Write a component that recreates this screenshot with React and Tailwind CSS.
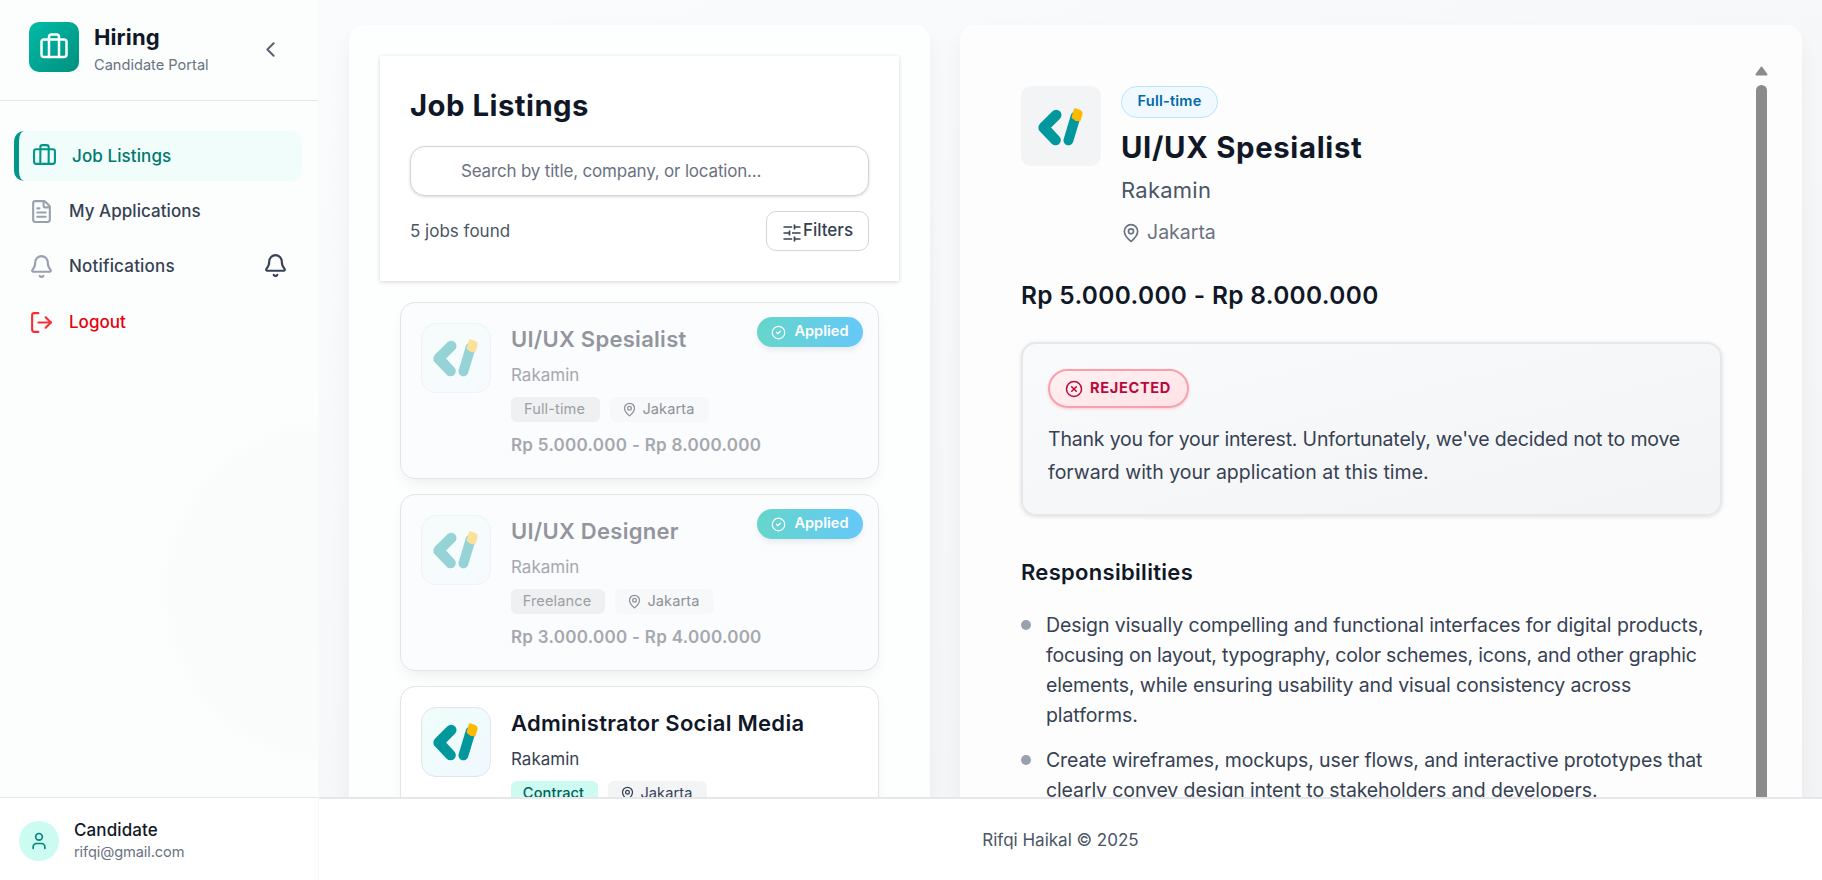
import React from "react";
import {
  Bell,
  Briefcase,
  ChevronLeft,
  CircleCheck,
  CircleX,
  FileText,
  LogOut,
  MapPin,
  User,
} from "lucide-react";

function CompanyMark({ className }) {
  return (
    <svg viewBox="0 0 136 112" className={className} fill="none">
      <path d="M55 18 L17 56 L53 94" stroke="#00979d" strokeWidth="32" strokeLinecap="round" strokeLinejoin="round" />
      <path d="M92 95 L114 22" stroke="#00979d" strokeWidth="30" strokeLinecap="round" />
      <path d="M108 2 Q109 -3 113 -2 L128 3 Q136 7 135 15 L128 37 Q113 39 103 28 Q101 26 102 23 Z" fill="#fdb900" />
    </svg>
  );
}

function SlidersMark() {
  return (
    <svg viewBox="0 0 18 18" className="mt-[3px] h-[18px] w-[18px]" fill="none" stroke="#364153" strokeWidth="1.7">
      <path d="M0.5 3h8.7M11.5 3h6M11.5 0.6v4.8M0.5 9h5.8M9 9h8.5M6.5 6.6v4.8M0.5 15h8.7M11.5 15h6M11.5 12.6v4.8" />
    </svg>
  );
}

const navItems = [
  { label: "My Applications", Icon: FileText, track: "tracking-[0.05px]" },
  { label: "Notifications", Icon: Bell, bell: true, track: "tracking-[0.19px]" },
];

function Sidebar() {
  return (
    <aside className="flex h-full w-[319px] shrink-0 flex-col border-r border-[#f7f8f9] bg-[#fcfdfd] bg-[radial-gradient(circle_at_335px_592px,#fafcfc_0px,#f9fcfb_150px,transparent_175px)]">
      <div className="flex h-[101px] shrink-0 border-b border-[#e5e7eb] pl-[29px] pt-[22px]">
        <div className="flex h-[50px] w-[50px] items-center justify-center rounded-[10px] bg-linear-to-br from-[#00bba7] to-[#009080]">
          <Briefcase size={30} color="white" />
        </div>
        <div className="ml-[15px] mt-px w-[164px] whitespace-nowrap">
          <div className="text-[22px] font-bold leading-[28px] tracking-[0.1px] text-[#101828]">Hiring</div>
          <div className="mt-1 text-[14.6px] leading-[20px] text-[#6a7282]">Candidate Portal</div>
        </div>
        <ChevronLeft size={25} className="mt-[15px] text-[#5b6472]" />
      </div>
      <nav className="flex flex-1 flex-col pl-[14px] pr-4 pt-[30px] text-[17px] font-medium">
        <div className="flex h-[50px] items-center gap-[15px] rounded-[10px] border-l-[5px] border-[#009689] bg-[#f0fdfa] pl-[13px] text-[#00786f]">
          <Briefcase size={25} className="-mt-0.5 text-[#009689]" />
          <span className="pt-px tracking-[0.1px]">Job Listings</span>
        </div>
        {navItems.map(({ label, Icon, bell, track }) => (
          <div key={label} className="mt-[5.5px] flex h-[50px] items-center gap-[15px] px-[15px] text-[#364153]">
            <Icon size={25} className="-mt-px text-[#99a1af]" />
            <span className={track}>{label}</span>
            {bell && <Bell size={25} className="-mr-px -mt-[3px] ml-auto text-[#364153]" />}
          </div>
        ))}
        <div className="mt-[6px] flex h-[50px] items-center gap-[15px] px-[15px] text-[#e7000b]">
          <LogOut size={25} className="-mt-px text-[#fb2c36]" />
          <span>Logout</span>
        </div>
      </nav>
      <div className="flex h-[83px] shrink-0 border-t border-[#e5e7eb] bg-white pl-[19px] pt-[23px]">
        <div className="flex h-10 w-10 items-center justify-center rounded-full bg-[#cbfbf1]">
          <User size={20} className="text-[#00857a]" />
        </div>
        <div className="-mt-[3px] ml-[15px] whitespace-nowrap">
          <div className="text-[17px] font-medium leading-[24px] tracking-[0.1px] text-[#101828]">Candidate</div>
          <div className="text-[14.6px] leading-[20px] tracking-[-0.1px] text-[#6a7282]">rifqi@gmail.com</div>
        </div>
      </div>
    </aside>
  );
}

const jobs = [
  { title: "UI/UX Spesialist", type: "Full-time", salary: "Rp 5.000.000 - Rp 8.000.000", applied: true, typeW: "w-[89px]" },
  { title: "UI/UX Designer", type: "Freelance", salary: "Rp 3.000.000 - Rp 4.000.000", applied: true, typeW: "w-[94px]" },
  { title: "Administrator Social Media", type: "Contract", salary: "Rp 4.000.000 - Rp 6.000.000", applied: false, typeW: "w-[87px]" },
];

function JobCard({ job }) {
  const a = job.applied;
  return (
    <div
      className={
        "relative flex h-[177px] shrink-0 whitespace-nowrap rounded-[15px] border border-[#e1e4e8] pl-5 pt-5 shadow-[0_8px_16px_-4px_rgba(0,0,0,0.07)] " +
        (a ? "bg-[#fbfcfd]" : "bg-white")
      }
    >
      <div
        className={
          "flex h-[70px] w-[70px] shrink-0 items-center justify-center rounded-[15px] border border-[#dfe6ea] bg-linear-to-br from-[#f0fdfa] to-[#f0f9ff] " +
          (a ? "opacity-40" : "")
        }
      >
        <CompanyMark className="-ml-[2px] h-[37px] w-[45px] overflow-visible" />
      </div>
      <div className="ml-5">
        <div className={"mt-[2px] text-[22px] font-semibold leading-[28px] tracking-[0.28px] " + (a ? "text-[#92959d]" : "text-[#101828]")}>
          {job.title}
        </div>
        <div className={"mt-[10px] text-[17px] leading-[25px] " + (a ? "text-[#a5a8af]" : "text-[#364153]")}>Rakamin</div>
        <div className="mt-[9px] flex h-[25px] gap-[10px] text-[14.6px] leading-[25px]">
          <span className={"rounded-[6px] pr-[2px] text-center tracking-[0.1px] " + job.typeW + (a ? " bg-[#eff0f1] text-[#9b9fa6]" : " bg-[#cbfbf1] font-medium text-[#005f5a]")}>
            {job.type}
          </span>
          <span className={"flex w-[99px] items-center justify-center gap-[5px] rounded-[6px] pr-[2px] tracking-[0.1px] " + (a ? "bg-[#f7f8f9] text-[#8d9199]" : "bg-[#f3f4f6] text-[#364153]")}>
            <MapPin size={15} />
            Jakarta
          </span>
        </div>
        <div className={"mt-[11px] text-[17px] font-semibold leading-[25px] tracking-[0.28px] " + (a ? "text-[#a5a8af]" : "text-[#364153]")}>
          {job.salary}
        </div>
      </div>
      {a && (
        <div className="absolute right-[15px] top-[14px] flex h-[30px] w-[106px] items-center justify-center gap-[8px] rounded-full bg-linear-to-r from-[#66d5ca] to-[#66c8f8] text-[14.6px] font-semibold text-white shadow-[0_4px_6px_-1px_rgba(0,0,0,0.08)]">
          <CircleCheck size={15} />
          Applied
        </div>
      )}
    </div>
  );
}

function JobList() {
  return (
    <section className="h-[900px] w-[581px] shrink-0 rounded-[15px] bg-[#fdfefe] px-[31px] pt-[31px] shadow-[0_12px_24px_-4px_rgba(0,0,0,0.07)]">
      <div className="h-[225px] bg-white px-[30px] pt-[30px] shadow-[0_1px_4px_rgba(0,0,0,0.17)]">
        <h1 className="text-[29.3px] font-bold leading-[40px] tracking-[0.48px] text-[#101828]">Job Listings</h1>
        <div className="mt-[20px] flex h-[50px] items-center rounded-[15px] border border-[#d1d5dc] bg-white pl-[50px] pt-px text-[17px] tracking-[-0.18px] text-[#6a7282] shadow-[0_1px_3px_rgba(0,0,0,0.15)]">
          Search by title, company, or location...
        </div>
        <div className="mt-[15px] flex h-10 items-center justify-between text-[17px] text-[#4a5565]">
          <span className="pt-px">5 jobs found</span>
          <button className="flex h-10 w-[103px] items-center justify-center rounded-[10px] border border-[#d1d5dc] bg-white pl-px font-medium text-[#364153]">
            <SlidersMark />
            <span className="ml-[2px]">Filters</span>
          </button>
        </div>
      </div>
      <div className="mx-5 mt-[21px] flex flex-col gap-[15px]">
        {jobs.map((job) => (
          <JobCard key={job.title} job={job} />
        ))}
      </div>
    </section>
  );
}

const duties = [
  [
    ["Design visually compelling and functional interfaces for digital products,", "tracking-[-0.09px]"],
    ["focusing on layout, typography, color schemes, icons, and other graphic", "tracking-[-0.22px]"],
    ["elements, while ensuring usability and visual consistency across", "tracking-[-0.12px]"],
    ["platforms.", "tracking-[-0.08px]"],
  ],
  [
    ["Create wireframes, mockups, user flows, and interactive prototypes that", "tracking-[-0.13px]"],
    ["clearly convey design intent to stakeholders and developers.", "tracking-[-0.12px]"],
  ],
];

function JobDetail() {
  return (
    <section className="flex h-[900px] w-[842px] shrink-0 whitespace-nowrap rounded-[15px] bg-[#fdfdfd] pl-[61px] pt-[36px] shadow-[0_12px_24px_-4px_rgba(0,0,0,0.07)]">
      <div className="w-[701px] pt-[25px]">
        <div className="flex">
          <div className="flex h-20 w-20 items-center justify-center rounded-[10px] bg-[#f3f4f6]">
            <CompanyMark className="-ml-[2px] mt-[2px] h-[37px] w-[45px] overflow-visible" />
          </div>
          <div className="ml-5">
            <div className="flex h-8 w-[97px] items-center justify-center rounded-full border border-[#b8e6fe] bg-[#f0f9ff] text-[14.6px] font-semibold tracking-[0.2px] text-[#0069a8]">
              Full-time
            </div>
            <h2 className="mt-[11px] text-[29.3px] font-bold leading-[37px] tracking-[0.68px] text-[#101828]">UI/UX Spesialist</h2>
            <div className="mt-[9px] text-[22px] leading-[30px] tracking-[0.25px] text-[#4a5565]">Rakamin</div>
            <div className="mt-[13px] flex h-[30px] items-center gap-[6px] text-[19.5px] text-[#6a7282]">
              <MapPin size={20} />
              Jakarta
            </div>
          </div>
        </div>
        <div className="mt-[30px] text-[24.4px] font-semibold leading-[34px] tracking-[0.35px] text-[#101828]">Rp 5.000.000 - Rp 8.000.000</div>
        <div className="mt-[30px] h-[174px] rounded-[15px] border-2 border-[#e5e7eb] bg-linear-to-br from-[#f9fafb] to-[#f3f4f6] px-[25px] pt-[25px] shadow-[0_1px_4px_rgba(0,0,0,0.12)]">
          <div className="flex h-[39px] w-[141px] items-center justify-center gap-[7px] rounded-full border-2 border-[#f8a0ab] bg-linear-to-br from-[#fff1f2] to-[#ffe2e5] pr-px text-[14.6px] font-bold text-[#b8093f] shadow-[0_1px_3px_rgba(255,32,86,0.2)]">
            <CircleX size={18} />
            <span className="tracking-[0.65px]">REJECTED</span>
          </div>
          <p className="mt-[15px] text-[19.5px] leading-[32.5px] text-[#364153]">
            <span className="tracking-[-0.18px]">Thank you for your interest. Unfortunately, we've decided not to move</span>
            <br />
            forward with your application at this time.
          </p>
        </div>
        <h3 className="mt-[40px] text-[22px] font-semibold leading-[32px] tracking-[0.3px] text-[#101828]">Responsibilities</h3>
        <ul className="mt-[22px] flex flex-col gap-[15px]">
          {duties.map((lines) => (
            <li key={lines[0][0]} className="flex text-[19.5px] leading-[30px] text-[#364153]">
              <span className="mt-[10px] h-[10px] w-[10px] shrink-0 rounded-full bg-[#99a1af]" />
              <div className="ml-[15px]">
                {lines.map(([line, track]) => (
                  <div key={line} className={track}>
                    {line}
                  </div>
                ))}
              </div>
            </li>
          ))}
        </ul>
      </div>
      <div className="ml-[33px] flex w-[13px] flex-col items-center">
        <svg viewBox="0 0 13 10" className="mt-[5px] h-[10px] w-[13px]">
          <path d="M6.5 1.5 L11.5 8.5 H1.5 Z" fill="#8b8b8b" stroke="#8b8b8b" strokeWidth="2" strokeLinejoin="round" />
        </svg>
        <div className="mt-[9px] w-[11px] flex-1 rounded-t-full bg-[#8b8b8b]" />
      </div>
    </section>
  );
}

export default function App() {
  return (
    <div className="flex h-[880px] w-[1822px] overflow-hidden bg-[#f6f7f9] font-['Inter','Liberation_Sans',sans-serif]">
      <Sidebar />
      <div className="flex min-w-0 flex-1 flex-col">
        <main className="flex h-[797px] shrink-0 gap-[30px] overflow-hidden bg-linear-to-br from-[#fafbfc] to-[#f3f4f6] pl-[30px] pt-[25px]">
          <JobList />
          <JobDetail />
        </main>
        <footer className="flex flex-1 items-center justify-center border-t-2 border-[#e5e7eb] bg-white pr-[20px] pt-[3px] text-[17px] text-[#4a5565]">
          Rifqi Haikal © 2025
        </footer>
      </div>
    </div>
  );
}
